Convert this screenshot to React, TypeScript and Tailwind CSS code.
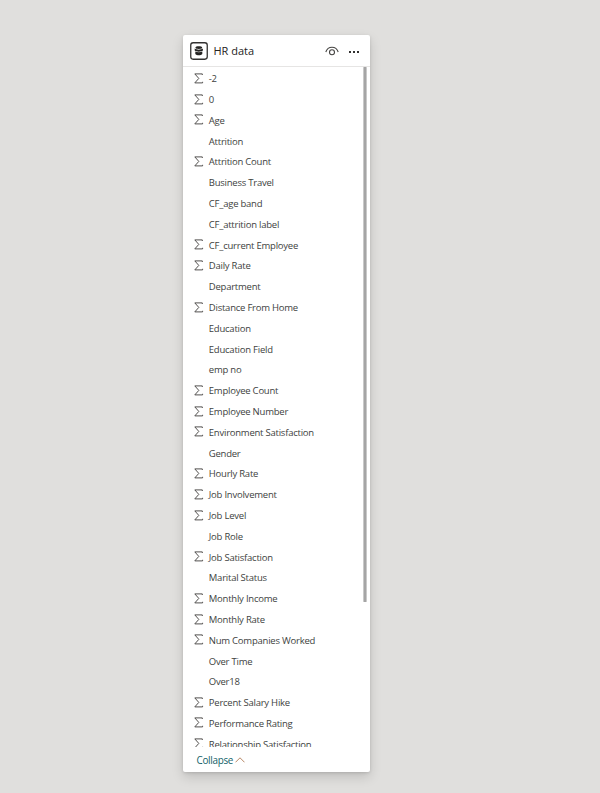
const fields: { name: string; numeric: boolean }[] = [
  { name: "-2", numeric: true },
  { name: "0", numeric: true },
  { name: "Age", numeric: true },
  { name: "Attrition", numeric: false },
  { name: "Attrition Count", numeric: true },
  { name: "Business Travel", numeric: false },
  { name: "CF_age band", numeric: false },
  { name: "CF_attrition label", numeric: false },
  { name: "CF_current Employee", numeric: true },
  { name: "Daily Rate", numeric: true },
  { name: "Department", numeric: false },
  { name: "Distance From Home", numeric: true },
  { name: "Education", numeric: false },
  { name: "Education Field", numeric: false },
  { name: "emp no", numeric: false },
  { name: "Employee Count", numeric: true },
  { name: "Employee Number", numeric: true },
  { name: "Environment Satisfaction", numeric: true },
  { name: "Gender", numeric: false },
  { name: "Hourly Rate", numeric: true },
  { name: "Job Involvement", numeric: true },
  { name: "Job Level", numeric: true },
  { name: "Job Role", numeric: false },
  { name: "Job Satisfaction", numeric: true },
  { name: "Marital Status", numeric: false },
  { name: "Monthly Income", numeric: true },
  { name: "Monthly Rate", numeric: true },
  { name: "Num Companies Worked", numeric: true },
  { name: "Over Time", numeric: false },
  { name: "Over18", numeric: false },
  { name: "Percent Salary Hike", numeric: true },
  { name: "Performance Rating", numeric: true },
  { name: "Relationship Satisfaction", numeric: true },
];

function SigmaIcon() {
  return (
    <svg width="10" height="11" viewBox="0 0 10 11" fill="none" stroke="#4a4846" strokeWidth="0.95">
      <path d="M8.3 2V0.9H0.8L4.8 5.4L0.8 9.9H8.6V8.8" />
    </svg>
  );
}

function TableIcon() {
  return (
    <svg width="18" height="18" viewBox="0 0 18 18">
      <rect x="0.75" y="0.75" width="16.5" height="16.5" rx="2.4" fill="#fff" stroke="#323130" strokeWidth="1.3" />
      <path d="M5.4 5.7C5.4 3.9 12.2 3.9 12.2 5.7C12.2 7.3 5.4 7.3 5.4 5.7Z" fill="#252423" />
      <path d="M4.7 6.6C6.5 8 11.1 8 12.9 6.6V8.5C11.3 10 6.3 10 4.7 8.5Z" fill="#252423" />
      <path d="M5.3 9.5C7.1 10.4 10.5 10.4 12.3 9.5V12C11.2 13.7 6.4 13.7 5.3 12Z" fill="#252423" />
    </svg>
  );
}

function EyeIcon() {
  return (
    <svg width="14" height="10" viewBox="0 0 14 10" fill="none" stroke="#454442">
      <path d="M0.8 6C1.8 3 4.2 1.2 7 1.2S12.2 3 13.2 6" strokeWidth="1.1" />
      <circle cx="7" cy="6.3" r="2.5" strokeWidth="1.1" />
    </svg>
  );
}

export default function App() {
  return (
    <main className="h-[793px] w-[600px] overflow-hidden bg-[#e0dfdd] pt-[35px] pl-[183px] font-['Open_Sans','Noto_Sans',sans-serif]">
      <section className="flex h-[737px] w-[187px] flex-col rounded-[2px] bg-white shadow-[0_5px_12px_rgba(0,0,0,0.15),0_1px_3px_rgba(0,0,0,0.12)]">
        <header className="flex h-8 shrink-0 items-center border-b border-[#e6e5e4] pr-[11px] pl-[7px]">
          <TableIcon />
          <h1 className="ml-[5.5px] text-[11px] leading-4 font-normal text-[#252423]">HR data</h1>
          <button className="mt-[1px] ml-auto" aria-label="Toggle visibility">
            <EyeIcon />
          </button>
          <button className="mt-[2px] ml-[10px] flex gap-[2px]" aria-label="More options">
            <span className="size-[2px] bg-[#323130]" />
            <span className="size-[2px] bg-[#323130]" />
            <span className="size-[2px] bg-[#323130]" />
          </button>
        </header>
        <div className="flex h-[680px] shrink-0 justify-between overflow-hidden pr-[3px]">
          <ul className="pt-[0.9px] pl-[10.5px]">
            {fields.map((field) => (
              <li key={field.name} className="flex h-[20.81px] items-center">
                <span className="flex w-[15.3px] shrink-0">{field.numeric && <SigmaIcon />}</span>
                <span className="pt-[2px] text-[9.5px] leading-4 tracking-[-0.23px] whitespace-nowrap text-[#403f3e]">{field.name}</span>
              </li>
            ))}
          </ul>
          <div className="h-[535px] w-[4px] shrink-0 rounded-[1px] border-x border-[#c9c9c9] bg-[#a5a5a5]" />
        </div>
        <footer className="flex h-[25px] items-center pt-[1px] pl-[13.5px]">
          <button className="flex items-center text-[9.9px] leading-4 tracking-[-0.3px] text-[#125f68]">
            Collapse
            <svg className="ml-[2px]" width="10" height="6" viewBox="0 0 10 6" fill="none" stroke="#b07a55" strokeWidth="0.9">
              <path d="M0.5 5.3L5 0.8L9.5 5.3" />
            </svg>
          </button>
        </footer>
      </section>
    </main>
  );
}
